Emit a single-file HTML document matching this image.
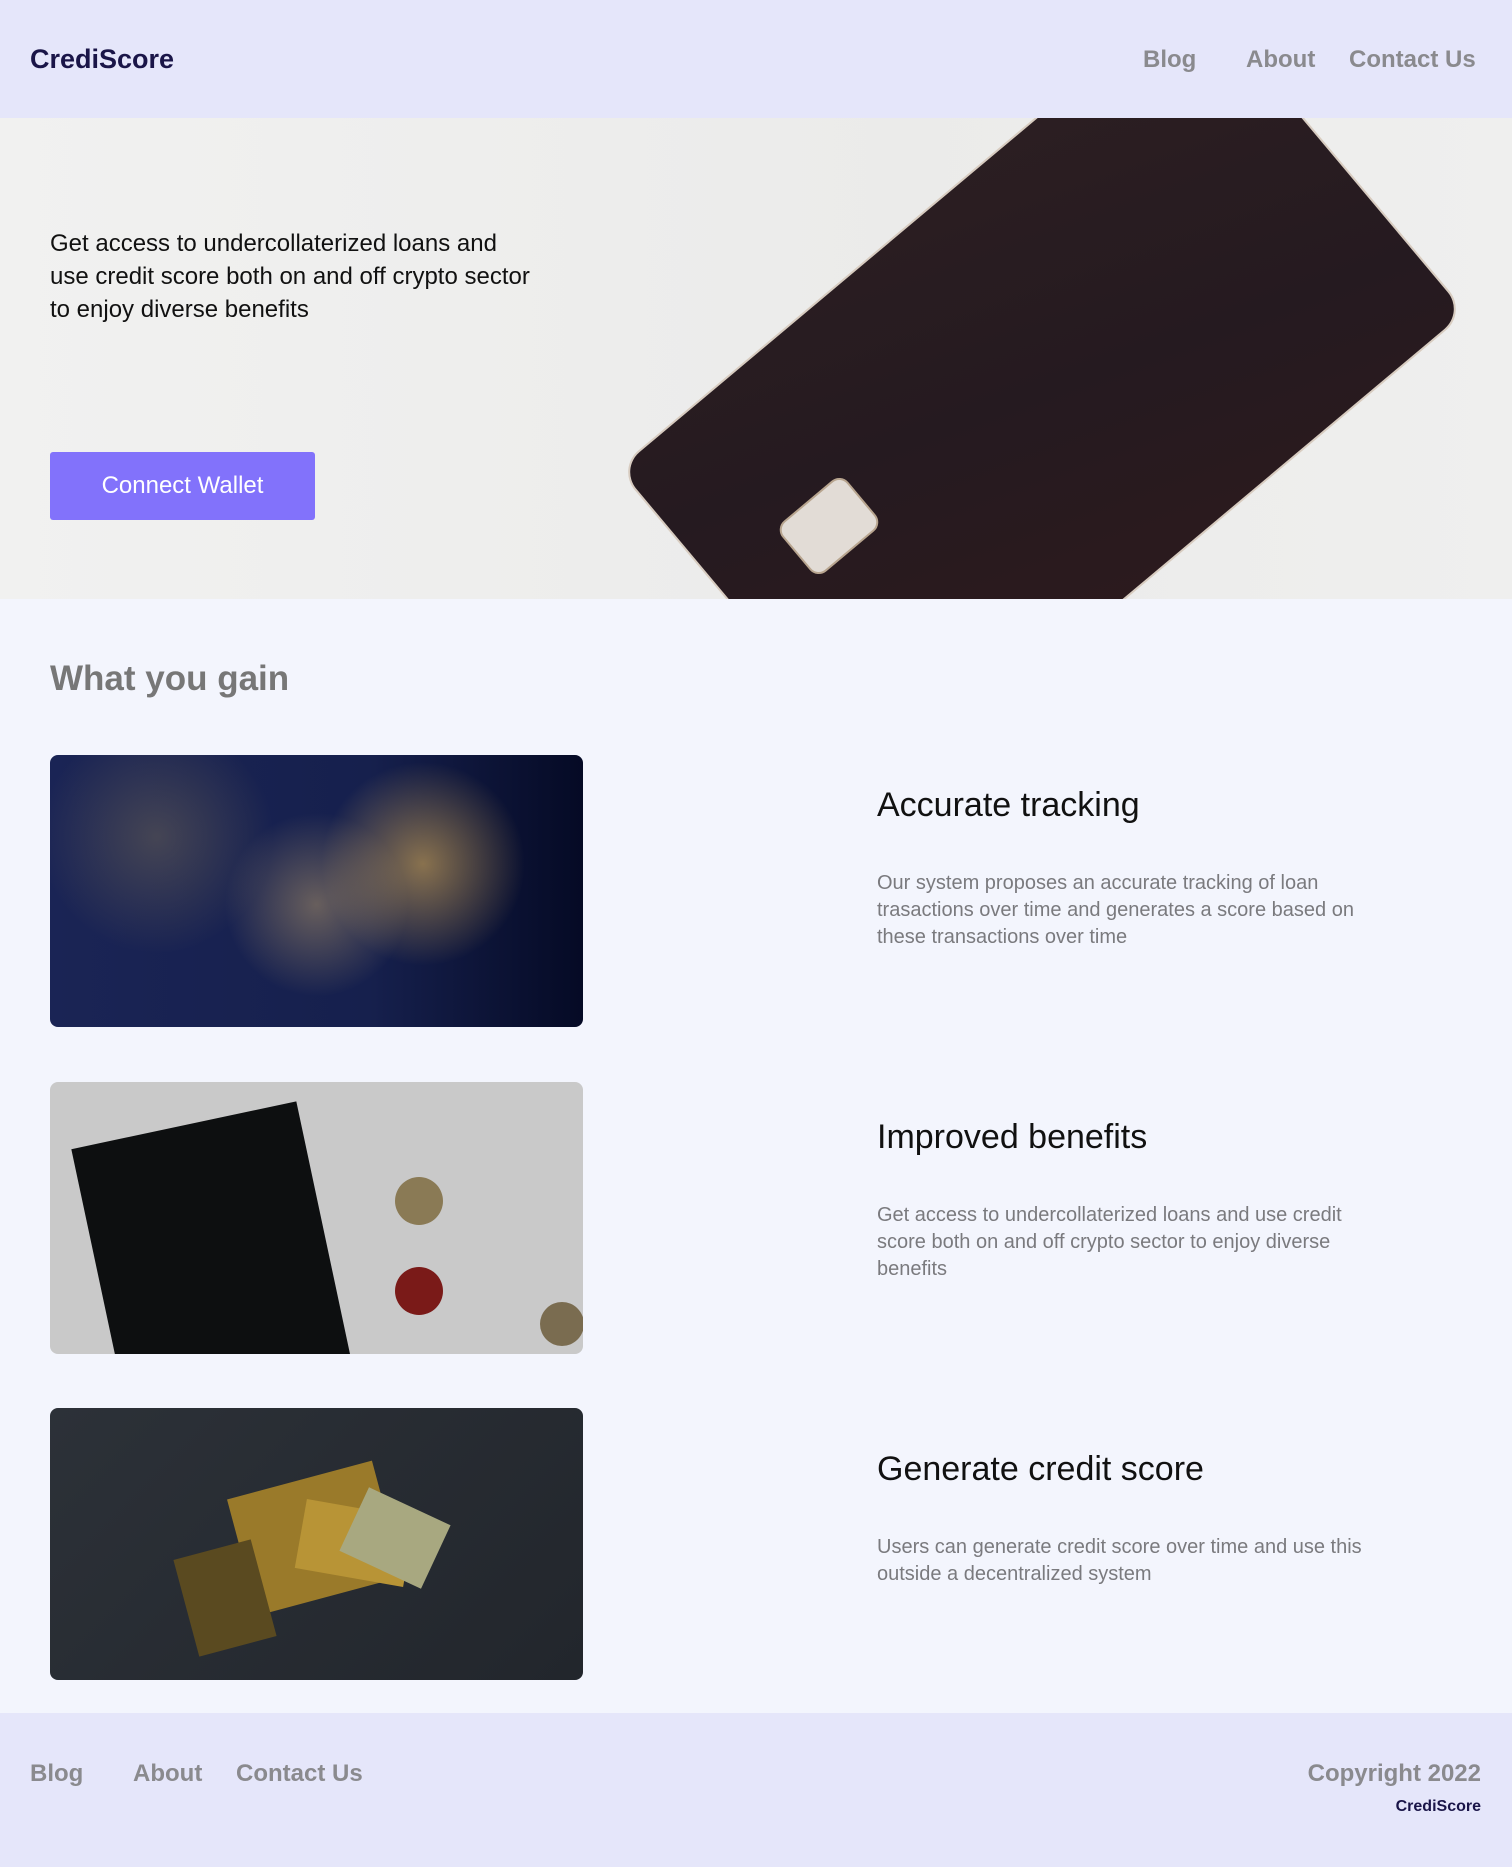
<!DOCTYPE html>
<html><head><meta charset="utf-8"><style>
*{margin:0;padding:0;box-sizing:border-box}
body{width:1512px;height:1867px;font-family:"Liberation Sans",sans-serif;background:#f3f5fd;position:relative;overflow:hidden}
.hdr{position:absolute;left:0;top:0;width:1512px;height:118px;background:#e5e6fa}
.logo{position:absolute;left:30px;top:44px;font-size:27px;font-weight:bold;color:#1a1548}
.nav a{position:absolute;top:46px;font-size:24px;font-weight:bold;color:#8a8a8e;text-decoration:none}
.hero{position:absolute;left:0;top:118px;width:1512px;height:481px;background:linear-gradient(90deg,#f1f1f0,#ebebea 60%,#efefee);overflow:hidden}
.hero p{position:absolute;left:50px;top:109px;width:490px;font-size:24px;line-height:33px;color:#111}
.btn{position:absolute;left:50px;top:334px;width:265px;height:68px;background:#8272fb;border-radius:3px;color:#fff;font-size:24px;line-height:68px;text-align:center}
.card{position:absolute;left:668px;top:61px;width:748px;height:423px;border-radius:26px;transform:rotate(-40deg);background:linear-gradient(200deg,#2d1f22,#251a20 50%,#2e1a1c);box-shadow:0 0 0 2px #d8ccc0}
.chip{position:absolute;left:786px;top:375px;width:86px;height:66px;border-radius:12px;transform:rotate(-40deg);background:#e2dcd6;border:2px solid #b8a58f}
h2{position:absolute;left:50px;top:659px;font-size:35px;font-weight:bold;color:#777}
.img{position:absolute;left:50px;width:533px;height:272px;border-radius:8px;overflow:hidden}
.t{position:absolute;left:877px;font-size:34px;color:#111}
.d{position:absolute;left:877px;width:505px;font-size:20px;line-height:27px;color:#7a7a7e}
.ftr{position:absolute;left:0;top:1713px;width:1512px;height:154px;background:#e5e6fa}
.ftr a{position:absolute;top:47px;font-size:24px;font-weight:bold;color:#8a8a8e}
</style></head><body>
<div class="hdr"><div class="logo">CrediScore</div>
<div class="nav"><a style="left:1143px">Blog</a><a style="left:1246px">About</a><a style="left:1349px">Contact Us</a></div></div>
<div class="hero">
<p>Get access to undercollaterized loans and use credit score both on and off crypto sector to enjoy diverse benefits</p>
<div class="btn">Connect Wallet</div>
<div class="card"></div>
<div class="chip"></div>
</div>
<h2>What you gain</h2>
<div class="img" style="top:755px;background:radial-gradient(circle at 70% 40%,rgba(255,200,90,.5),transparent 25%),radial-gradient(circle at 50% 55%,rgba(255,210,120,.35),transparent 30%),radial-gradient(circle at 20% 30%,rgba(200,170,90,.25),transparent 25%),linear-gradient(90deg,#1a2455,#16204d 60%,#050a25)"></div>
<div class="t" style="top:786px">Accurate tracking</div>
<div class="d" style="top:870px">Our system proposes an accurate tracking of loan trasactions over time and generates a score based on these transactions over time</div>
<div class="img" style="top:1082px;background:#c9c9c9">
<div style="position:absolute;left:50px;top:40px;width:230px;height:300px;background:#0d0f10;transform:rotate(-12deg)"></div>
<div style="position:absolute;left:345px;top:95px;width:48px;height:48px;border-radius:50%;background:#8a7a55"></div>
<div style="position:absolute;left:345px;top:185px;width:48px;height:48px;border-radius:50%;background:#7a1a18"></div>
<div style="position:absolute;left:490px;top:220px;width:44px;height:44px;border-radius:50%;background:#7a6c50"></div>
</div>
<div class="t" style="top:1118px">Improved benefits</div>
<div class="d" style="top:1202px">Get access to undercollaterized loans and use credit score both on and off crypto sector to enjoy diverse benefits</div>
<div class="img" style="top:1408px;background:linear-gradient(135deg,#2c3138,#22262c)">
<div style="position:absolute;left:190px;top:70px;width:150px;height:120px;background:#9a7a2a;transform:rotate(-15deg)"></div>
<div style="position:absolute;left:135px;top:140px;width:80px;height:100px;background:#5a4a20;transform:rotate(-15deg)"></div>
<div style="position:absolute;left:250px;top:100px;width:110px;height:70px;background:#b89436;transform:rotate(10deg)"></div>
<div style="position:absolute;left:300px;top:95px;width:90px;height:70px;background:#a8a880;transform:rotate(25deg)"></div>
</div>
<div class="t" style="top:1450px">Generate credit score</div>
<div class="d" style="top:1534px">Users can generate credit score over time and use this outside a decentralized system</div>
<div class="ftr">
<a style="left:30px">Blog</a><a style="left:133px">About</a><a style="left:236px">Contact Us</a>
<a style="right:31px">Copyright 2022</a>
<div style="position:absolute;right:31px;top:85px;font-size:16px;font-weight:bold;color:#1a1548">CrediScore</div>
</div>
</body></html>
